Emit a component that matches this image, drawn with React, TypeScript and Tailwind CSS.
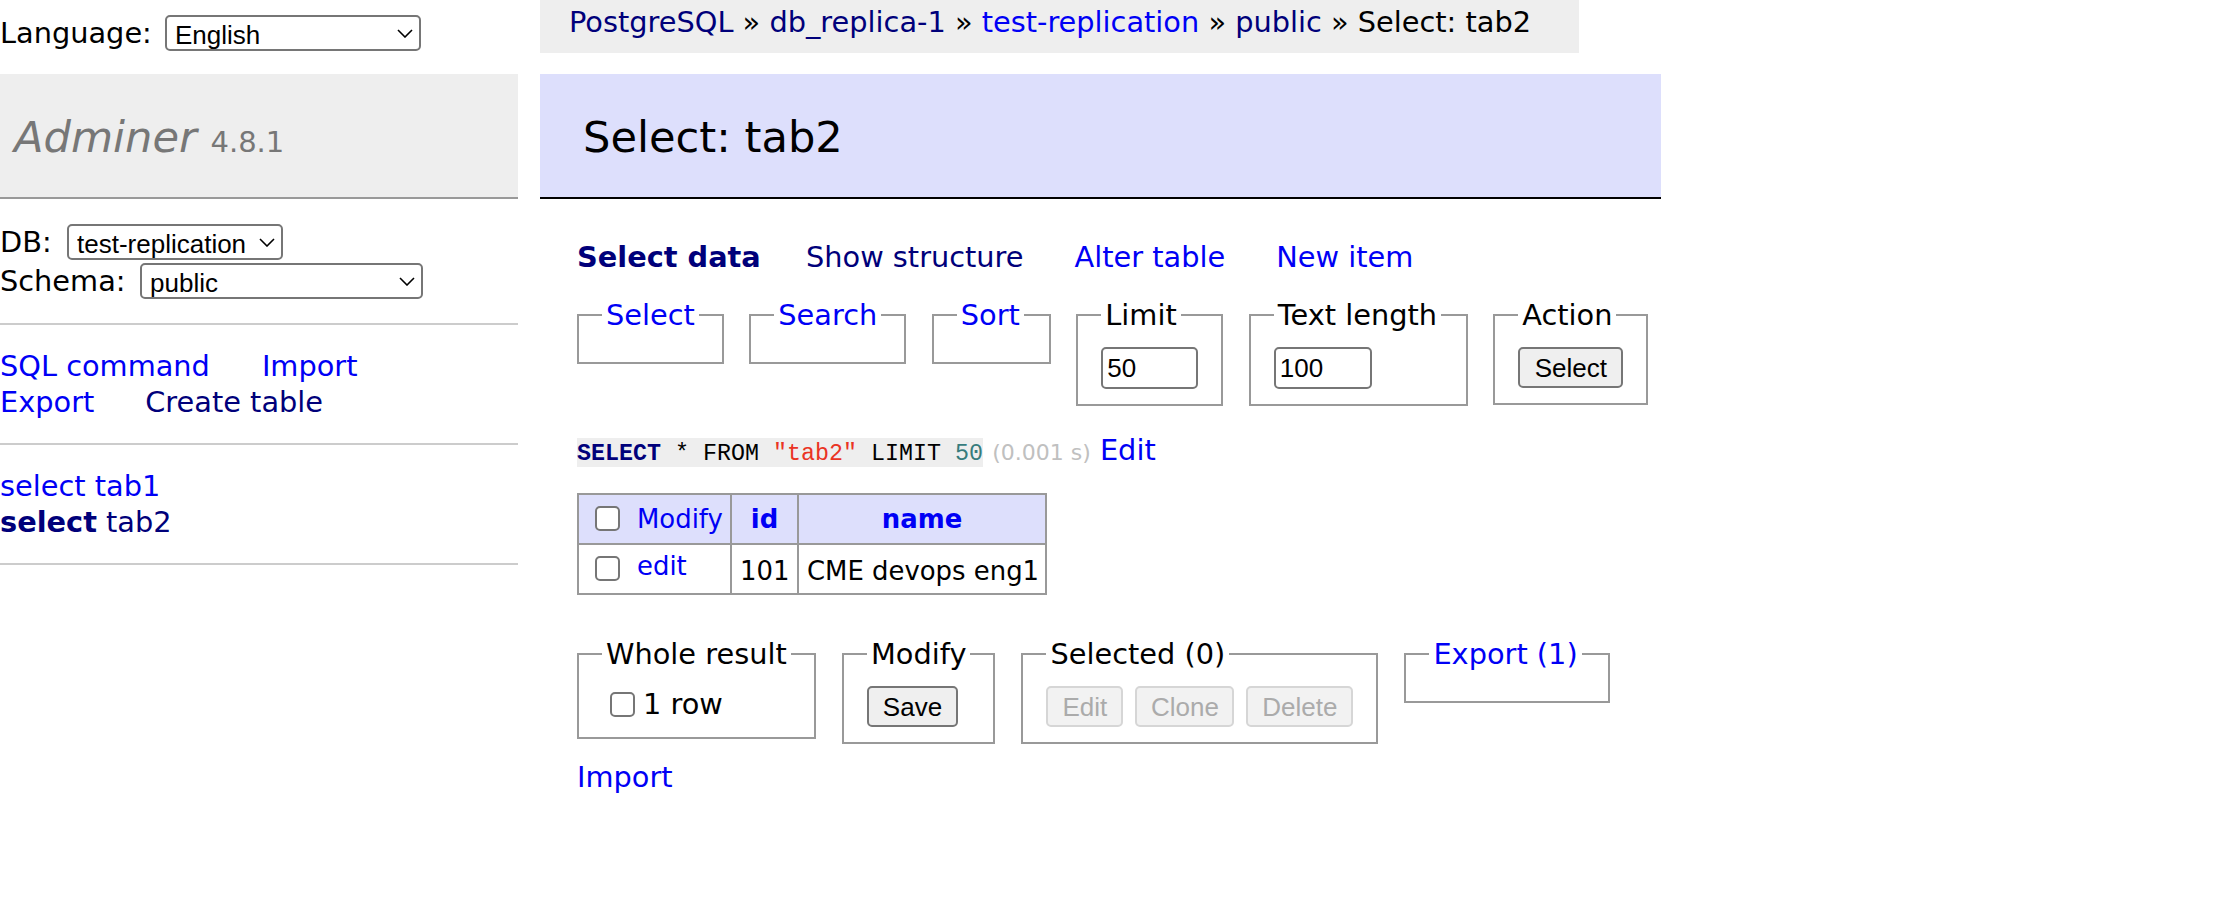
import type { ReactNode } from "react";

const link = "text-[#0000f5]";
const visited = "text-[#00007a]";
const control = "font-['Liberation_Sans',Arial,sans-serif] text-[26px]";

function Dropdown({ value, width }: { value: string; width: string }) {
    return (
        <div className={`relative h-[36px] shrink-0 ${width}`}>
            <select
                defaultValue={value}
                className={`${control} text-black appearance-none w-full h-full border-2 border-[#767676] rounded-[5px] bg-white pl-[8px] pr-[30px] outline-none`}
            >
                <option>{value}</option>
            </select>
            <svg className="pointer-events-none absolute right-[8px] top-[14px]" width="16" height="9" viewBox="0 0 16 9">
                <path d="M1 1 L8 8 L15 1" fill="none" stroke="#000" strokeWidth="1.6" />
            </svg>
        </div>
    );
}

function Box({ legend, width, children }: { legend: ReactNode; width: string; children?: ReactNode }) {
    return (
        <fieldset className={`shrink-0 border-2 border-[#999] px-[23px] pt-[14.4px] pb-[14.4px] ${width}`}>
            <legend className="px-[4px] whitespace-nowrap">{legend}</legend>
            {children}
        </fieldset>
    );
}

function Btn({ children, width, disabled }: { children: ReactNode; width: string; disabled?: boolean }) {
    return (
        <button
            disabled={disabled}
            className={`${control} h-[41px] ${width} border-2 rounded-[5px] ${disabled ? "bg-[#f2f2f2] border-[#d6d6d6] text-[#ababab]" : "bg-[#efefef] border-[#767676] text-black"}`}
        >
            {children}
        </button>
    );
}

function Check({ className }: { className: string }) {
    return (
        <input
            type="checkbox"
            className={`appearance-none shrink-0 w-[25px] h-[25px] border-2 border-[#767676] rounded-[5px] bg-white ${className}`}
        />
    );
}

function NumInput({ value, width }: { value: string; width: string }) {
    return (
        <input
            defaultValue={value}
            className={`${control} text-black h-[42px] ${width} border-2 border-[#767676] rounded-[5px] bg-white pl-[4px] outline-none`}
        />
    );
}

export default function App() {
    return (
        <div className="flex h-[912px] w-full bg-white text-black font-['DejaVu_Sans',Verdana,sans-serif] text-[28.8px] leading-[36px]">
            {/* menu */}
            <div className="w-[518px] shrink-0">
                <div className="h-[74px] pt-[14px]">
                    <div className="flex items-center h-[37px]">
                        <span className="w-[165px] shrink-0">Language:</span>
                        <Dropdown value="English" width="w-[256px]" />
                    </div>
                </div>
                <div className="h-[125px] bg-[#eee] border-b-2 border-[#999] pl-[14px] pt-[36px] text-[#777] text-[43.2px] leading-[54px] whitespace-nowrap">
                    <a href="#" className="italic">Adminer</a> <span className="text-[29px]">4.8.1</span>
                </div>
                <div className="py-[23px] border-b-2 border-[#ccc]">
                    <div className="flex items-center h-[39px]">
                        <span className="w-[67px] shrink-0">DB:</span>
                        <Dropdown value="test-replication" width="w-[216px]" />
                    </div>
                    <div className="flex items-center h-[39px]">
                        <span className="w-[140px] shrink-0">Schema:</span>
                        <Dropdown value="public" width="w-[283px]" />
                    </div>
                </div>
                <div className="py-[23px] border-b-2 border-[#ccc] whitespace-nowrap">
                    <div className="flex gap-[52px]">
                        <a href="#" className={link}>SQL command</a>
                        <a href="#" className={link}>Import</a>
                    </div>
                    <div className="flex gap-[51px]">
                        <a href="#" className={link}>Export</a>
                        <a href="#" className={visited}>Create table</a>
                    </div>
                </div>
                <div className="py-[23px] border-b-2 border-[#ccc] whitespace-nowrap">
                    <div>
                        <a href="#" className={link}>select</a> <a href="#" className={link}>tab1</a>
                    </div>
                    <div className={visited}>
                        <b>select</b> tab2
                    </div>
                </div>
            </div>

            {/* content */}
            <div className="ml-[22px] w-[1121px] shrink-0">
                <div className="w-[1039px] h-[53px] bg-[#eee] px-[29px] leading-[44px] whitespace-nowrap">
                    <a href="#" className={visited}>PostgreSQL</a> » <a href="#" className={visited}>db_replica-1</a> »{" "}
                    <a href="#" className={link}>test-replication</a> » <a href="#" className={visited}>public</a> » Select: tab2
                </div>
                <div className="mt-[21px] h-[125px] bg-[#dddffc] border-b-2 border-black pl-[43px] pt-[36px] text-[43.2px] leading-[54px]">
                    Select: tab2
                </div>

                <div className="pl-[37px]">
                    <div className="mt-[40px] flex gap-[51px] whitespace-nowrap">
                        <span className="w-[178px] font-bold text-[#00007a]">Select data</span>
                        <a href="#" className={visited}>Show structure</a>
                        <a href="#" className={link}>Alter table</a>
                        <a href="#" className={link}>New item</a>
                    </div>

                    <div className="mt-[22px] flex items-start gap-[25.5px]">
                        <Box legend={<a href="#" className={link}>Select</a>} width="w-[146px]" />
                        <Box legend={<a href="#" className={link}>Search</a>} width="w-[156px]" />
                        <Box legend={<a href="#" className={link}>Sort</a>} width="w-[119px]" />
                        <Box legend="Limit" width="w-[147px]">
                            <NumInput value="50" width="w-[97px]" />
                        </Box>
                        <Box legend="Text length" width="w-[219px]">
                            <NumInput value="100" width="w-[98px]" />
                        </Box>
                        <Box legend="Action" width="w-[155px]">
                            <Btn width="w-[105px]">Select</Btn>
                        </Box>
                    </div>

                    <div className="mt-[26px] h-[36px] whitespace-nowrap">
                        <code className="bg-[#eee] font-['Liberation_Mono',monospace] text-[23.33px] leading-[26px] pt-[3px]">
                            <span className="font-bold text-[#00007a]">SELECT</span> * FROM{" "}
                            <span className="text-[#ea3323]">"tab2"</span> LIMIT <span className="text-[#377c7d]">50</span>
                        </code>{" "}
                        <span className="text-[#c0c0c0] text-[22px] leading-[24px]">(0.001 s)</span>{" "}
                        <a href="#" className={link}>Edit</a>
                    </div>

                    {/* result table */}
                    <div className="mt-[25px] w-fit border-2 border-[#999] text-[25.92px] leading-[32.4px] whitespace-nowrap">
                        <div className="flex h-[50px] bg-[#dddffc] border-b-2 border-[#999]">
                            <div className="w-[153px] border-r-2 border-[#999] flex items-center pl-[16px]">
                                <Check className="" />
                                <a href="#" className={`ml-[17px] ${link}`}>Modify</a>
                            </div>
                            <div className="w-[67px] border-r-2 border-[#999] flex items-center justify-center font-bold">
                                <a href="#" className={link}>id</a>
                            </div>
                            <div className="w-[246px] flex items-center justify-center font-bold">
                                <a href="#" className={link}>name</a>
                            </div>
                        </div>
                        <div className="flex h-[48px]">
                            <div className="w-[153px] border-r-2 border-[#999] flex items-center pl-[16px]">
                                <Check className="" />
                                <a href="#" className={`ml-[17px] -mt-[6px] ${link}`}>edit</a>
                            </div>
                            <div className="w-[67px] border-r-2 border-[#999] flex items-center pl-[8px] pt-[4px]">101</div>
                            <div className="w-[246px] flex items-center pl-[8px] pt-[4px]">CME devops eng1</div>
                        </div>
                    </div>

                    {/* footer actions */}
                    <div className="mt-[41px] flex items-start gap-[26px]">
                        <Box legend="Whole result" width="w-[239px]">
                            <label className="flex items-center h-[36px] whitespace-nowrap">
                                <Check className="ml-[8px] mr-[8px]" />1 row
                            </label>
                        </Box>
                        <Box legend="Modify" width="w-[151px]">
                            <Btn width="w-[91px]">Save</Btn>
                        </Box>
                        <Box legend="Selected (0)" width="w-[357px]">
                            <div className="flex gap-[12px]">
                                <Btn width="w-[77px]" disabled>Edit</Btn>
                                <Btn width="w-[99px]" disabled>Clone</Btn>
                                <Btn width="w-[107px]" disabled>Delete</Btn>
                            </div>
                        </Box>
                        <Box legend={<a href="#" className={link}>Export (1)</a>} width="w-[206px]" />
                    </div>

                    <div className="mt-[15px]">
                        <a href="#" className={link}>Import</a>
                    </div>
                </div>
            </div>
        </div>
    );
}
